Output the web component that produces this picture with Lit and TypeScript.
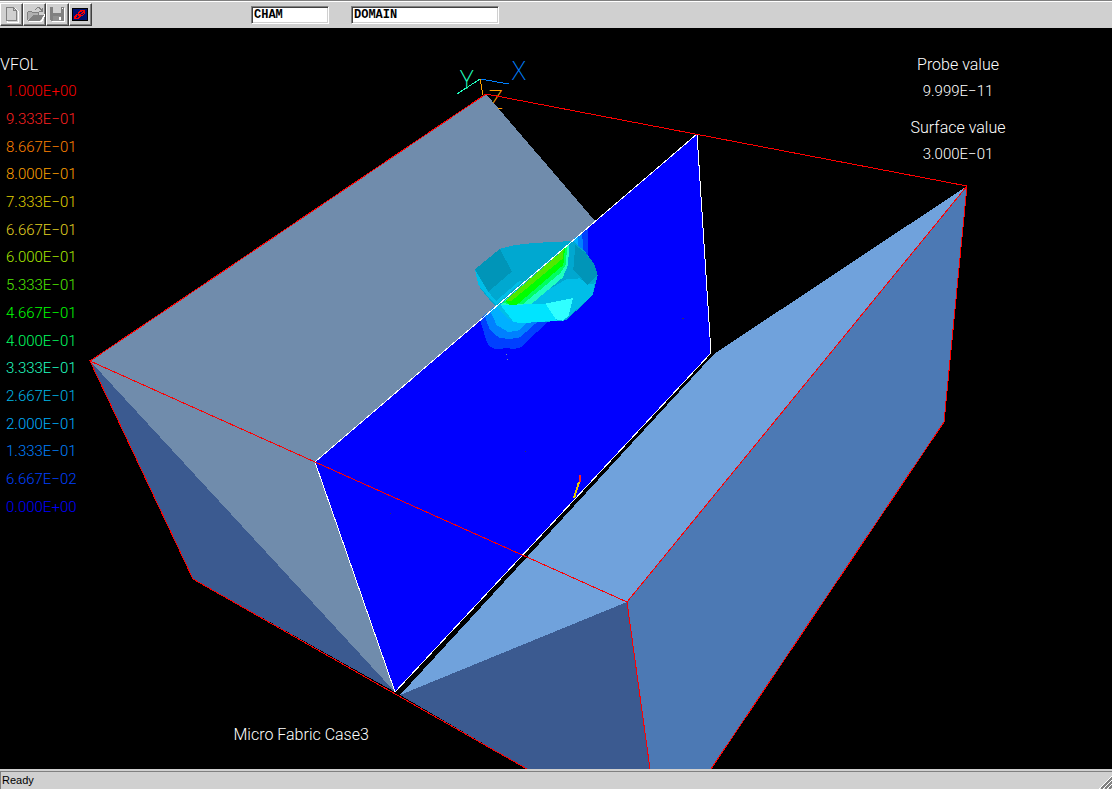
import { LitElement, html, css, svg } from "lit";
import { customElement } from "lit/decorators.js";

const LEGEND: [string, string][] = [
  ["1.000E+00", "#ff0000"],
  ["9.333E−01", "#ff2020"],
  ["8.667E−01", "#ff8000"],
  ["8.000E−01", "#ffa000"],
  ["7.333E−01", "#e0d000"],
  ["6.667E−01", "#e0d020"],
  ["6.000E−01", "#a8e800"],
  ["5.333E−01", "#50e800"],
  ["4.667E−01", "#00ff00"],
  ["4.000E−01", "#00ff60"],
  ["3.333E−01", "#20ffc0"],
  ["2.667E−01", "#00b8e8"],
  ["2.000E−01", "#00b0ff"],
  ["1.333E−01", "#0080ff"],
  ["6.667E−02", "#0040ff"],
  ["0.000E+00", "#0000ff"],
];

const newIcon = svg`
  <path d="M6 4h8l3 3v11H6z" fill="none" stroke="#fff"/>
  <path d="M5.500 3.500h7l3 3v10h-10zM12.500 3.500v3h3" fill="#d0d0d0" stroke="#808080"/>`;
const openIcon = svg`
  <path d="M5 17.500h12.500l4-8" fill="none" stroke="#fff"/>
  <path d="M3.500 15.500v-7l1-1h3l1 1h6v3" fill="#b0b0b0" stroke="#808080"/>
  <path d="M4 17l5-6h11l-4 6z" fill="#808080"/>
  <path d="M11 5h1V4h1V3h3v1h1v1h1V4h1v4h-4V7h2V6h-1V5h-1V4h-2v1h-1v1h-1z" fill="#808080"/>`;
const saveIcon = svg`
  <path d="M5 17.500h12.500V4" fill="none" stroke="#fff"/>
  <path d="M3 3h14v14H4l-1-1z" fill="#808080"/>
  <path d="M6 3h8v6H6z" fill="#d0d0d0"/>
  <path d="M15 4h1v1h-1z" fill="#fff"/>
  <path d="M6 12h8v5H6z" fill="#909090"/><path d="M12 13h2v3h-2z" fill="#fff"/>`;
const linkIcon = svg`
  <path d="M2 4h16v13H2z" fill="#000"/><path d="M3 5h14v11H3z" fill="#001070"/>
  <path d="M4 15v-3h1v-1h1v-1h2V8h1V7h1V6h5v4h-1v1h-1v1h-2v1h-1v1H9v1z" fill="#ff0000"/>
  <path d="M6 13h1v-1h2v1H8v1H6zM9 9h1V8h2V7h1v1h-1v1h-1v1H9zM13 9h1v1h-1v1h-2v-1h2zM7 11h1v1H7z" fill="#001070"/>`;

@customElement("scene-view")
class SceneView extends LitElement {
  static styles = css`
    :host { display: block; }
    .scene { display: block; width: 100%; height: 100%; }
    .axis { font: 26px "Noto Sans", sans-serif; font-weight: 200; }
  `;

  render() {
    return html`
      <svg class="scene" viewBox="0 28 1112 741" preserveAspectRatio="xMidYMid slice" shape-rendering="crispEdges" role="img" aria-label="Surface plot">
        <g fill="none">
          <path d="M480 79L509 84" stroke="#0080ff"/>
          <path d="M480 79L457 94" stroke="#20ffc0"/>
          <path d="M480 79L483 95" stroke="#ffa000"/>
        </g>
        <text class="axis" x="460" y="89" fill="#20ffc0">Y</text>
        <text class="axis" x="512" y="80" fill="#0080ff">X</text>
        <text class="axis" x="488" y="109" fill="#ffa000">Z</text>
        <polygon points="90,361 486,94 595,221 315,462 395,692" fill="#708cac"/>
        <polygon points="90,361 395,692 193,579" fill="#3b5a90"/>
        <polygon points="400,695 714,354 967,186 627,602" fill="#70a2dc"/>
        <polygon points="400,695 627,602 650,769 527,769" fill="#3b5a90"/>
        <polygon points="627,602 967,186 944,422 711,769 650,769" fill="#4c79b4"/>
        <polygon points="315,462 697,134 711,353 395,692" fill="#0000ff" stroke="#fff"/>
        <svg x="460" y="220" width="160" height="150" viewBox="0 0 480 450">
          <path d="M60 298L78 360L88 378L108 388L140 384L160 387L182 382L280 290L383 110V22L330 66z" fill="#0040ff"/>
          <path d="M73 286L90 330L118 354L150 357L180 352L250 290L370 90L366 36L330 66z" fill="#0080ff"/>
          <path d="M90 272L110 315L145 336L175 332L220 290L354 80V46L330 66z" fill="#00b0ff"/>
          <path d="M45 148L120 86L160 76L220 69L340 63L375 95L400 128L413 165L398 225L320 300L270 302L105 258L60 205z" fill="#00a8d0"/>
          <path d="M105 256L145 297L175 308L310 303L398 226L404 190L382 194L360 175L318 178L230 230z" fill="#00bee8"/>
          <path d="M45 148L120 86L155 155L85 215z" fill="#0095b8"/>
          <path d="M45 150L84 214L108 243L180 181L187 184L110 254L93 240L55 195z" fill="#00bee8"/>
          <path d="M346 75L375 98L402 130L413 165L382 195L340 148z" fill="#0095b8"/>
          <path d="M120 255L328 73L324 135L308 173L213 253z" fill="#20ffc0"/>
          <path d="M127 250L322 78L317 135L300 160L188 253z" fill="#00ff60"/>
          <path d="M136 244L315 84L310 135L170 255L148 254z" fill="#00ff00"/>
          <path d="M137 241L311 88L309 115L153 244z" fill="#50e800"/>
          <path d="M122 256L258 251L290 302L180 310L160 305z" fill="#00e4ff"/>
          <path d="M256 251L339 234L326 288L308 302L288 298z" fill="#30ffff"/>
          <path d="M138 402h3v3h-3zM141 417h3v3h-3z" fill="#708cac"/>
        </svg>
        <path d="M315 462L697 134" stroke="#fff"/>
        <path d="M682 318h2v1h-2zM525 451h1v1h-1zM390 513h1v1h-1z" fill="#303060"/>
        <path d="M574 498L579 482" stroke="#e8c800" stroke-width="2"/>
        <path d="M580 482V475" stroke="#ff2020" stroke-width="2"/>
        <path d="M90 361L486 94L967 186L627 602L90 361L193 579L527 769M627 602L650 769M967 186L944 422L711 769" fill="none" stroke="#ff0000"/>
      </svg>
    `;
  }
}

@customElement("app-root")
class AppRoot extends LitElement {
  static styles = css`
    :host {
      display: flex;
      flex-direction: column;
      height: 100vh;
      overflow: hidden;
      background: #000;
    }
    .toolbar {
      display: flex;
      align-items: flex-start;
      box-sizing: border-box;
      height: 28px;
      padding-top: 1px;
      background: #d0d0d0;
      border-top: 1px solid #808080;
      box-shadow: inset 0 1px #fff;
    }
    .buttons { display: flex; width: 251px; padding-top: 1px; }
    .tool {
      box-sizing: border-box;
      width: 23px;
      height: 23px;
      padding: 0;
      border: 1px solid;
      border-color: #fff #404040 #404040 #fff;
      box-shadow: inset -1px -1px #808080;
      background: #d0d0d0;
    }
    .glyph { display: block; width: 21px; height: 21px; }
    .fields { display: flex; gap: 22px; padding-top: 4px; }
    .field {
      box-sizing: border-box;
      height: 18px;
      padding: 0 2px;
      border: 1px solid;
      border-color: #808080 #fff #fff #808080;
      border-radius: 0;
      box-shadow: inset 1px 1px #404040, inset -1px -1px #d0d0d0;
      background: #fff;
      color: #000;
      font: bold 12px "Liberation Mono", monospace;
      outline: none;
    }
    .short { width: 78px; }
    .long { width: 148px; }
    .viewport {
      position: relative;
      flex: 1;
      min-height: 0;
      display: flex;
      justify-content: space-between;
      overflow: hidden;
      color: #fff;
      font: 300 16px/27px Roboto, "Liberation Sans", sans-serif;
    }
    .scene { position: absolute; inset: 0; }
    .legend, .readings { position: relative; padding-top: 23px; white-space: nowrap; }
    .name { margin: 0; font: inherit; }
    .levels {
      display: grid;
      grid-auto-rows: 1fr;
      align-items: center;
      height: 443px;
      margin: 0;
      padding: 0 0 0 6px;
      list-style: none;
      font-size: 15px;
    }
    .readings { width: 200px; margin: 0 54px 0 0; text-align: center; }
    .readings dt, .readings dd { margin: 0; }
    .readings dd { margin-bottom: 9px; font-size: 15px; }
    .caption { position: absolute; left: 21%; bottom: 21px; margin: 0; }
    .status {
      display: flex;
      align-items: flex-end;
      justify-content: space-between;
      box-sizing: border-box;
      height: 20px;
      border-top: 2px solid #d0d0d0;
      background: #d0d0d0;
      box-shadow: inset 1px 1px #808080;
      color: #000;
      font: 11px/17px "Liberation Sans", sans-serif;
      padding-left: 2px;
    }
    .grip { width: 13px; height: 13px; }
  `;

  render() {
    const tools = [
      { name: "New", icon: newIcon },
      { name: "Open", icon: openIcon },
      { name: "Save", icon: saveIcon },
      { name: "Link", icon: linkIcon },
    ];
    return html`
      <header class="toolbar">
        <div class="buttons">
          ${tools.map((t) => html`
            <button class="tool" type="button" aria-label=${t.name}>
              <svg class="glyph" viewBox="0 0 21 21" shape-rendering="crispEdges">${t.icon}</svg>
            </button>`)}
        </div>
        <div class="fields">
          <input class="field short" aria-label="Object name" .value=${"CHAM"}>
          <input class="field long" aria-label="Object type" .value=${"DOMAIN"}>
        </div>
      </header>
      <main class="viewport">
        <scene-view class="scene"></scene-view>
        <section class="legend">
          <h1 class="name">VFOL</h1>
          <ul class="levels">
            ${LEGEND.map(([label, color]) => html`<li style="color:${color}">${label}</li>`)}
          </ul>
        </section>
        <dl class="readings">
          <dt>Probe value</dt><dd>9.999E−11</dd>
          <dt>Surface value</dt><dd>3.000E−01</dd>
        </dl>
        <p class="caption">Micro Fabric Case3</p>
      </main>
      <footer class="status">
        <span>Ready</span>
        <svg class="grip" viewBox="0 0 13 13" shape-rendering="crispEdges">
          <path d="M0 13L13 0M4 13L13 4M8 13L13 8" stroke="#fff"/>
          <path d="M2 13L13 2M6 13L13 6M10 13L13 10" stroke="#808080" stroke-width="2"/>
        </svg>
      </footer>
    `;
  }
}
